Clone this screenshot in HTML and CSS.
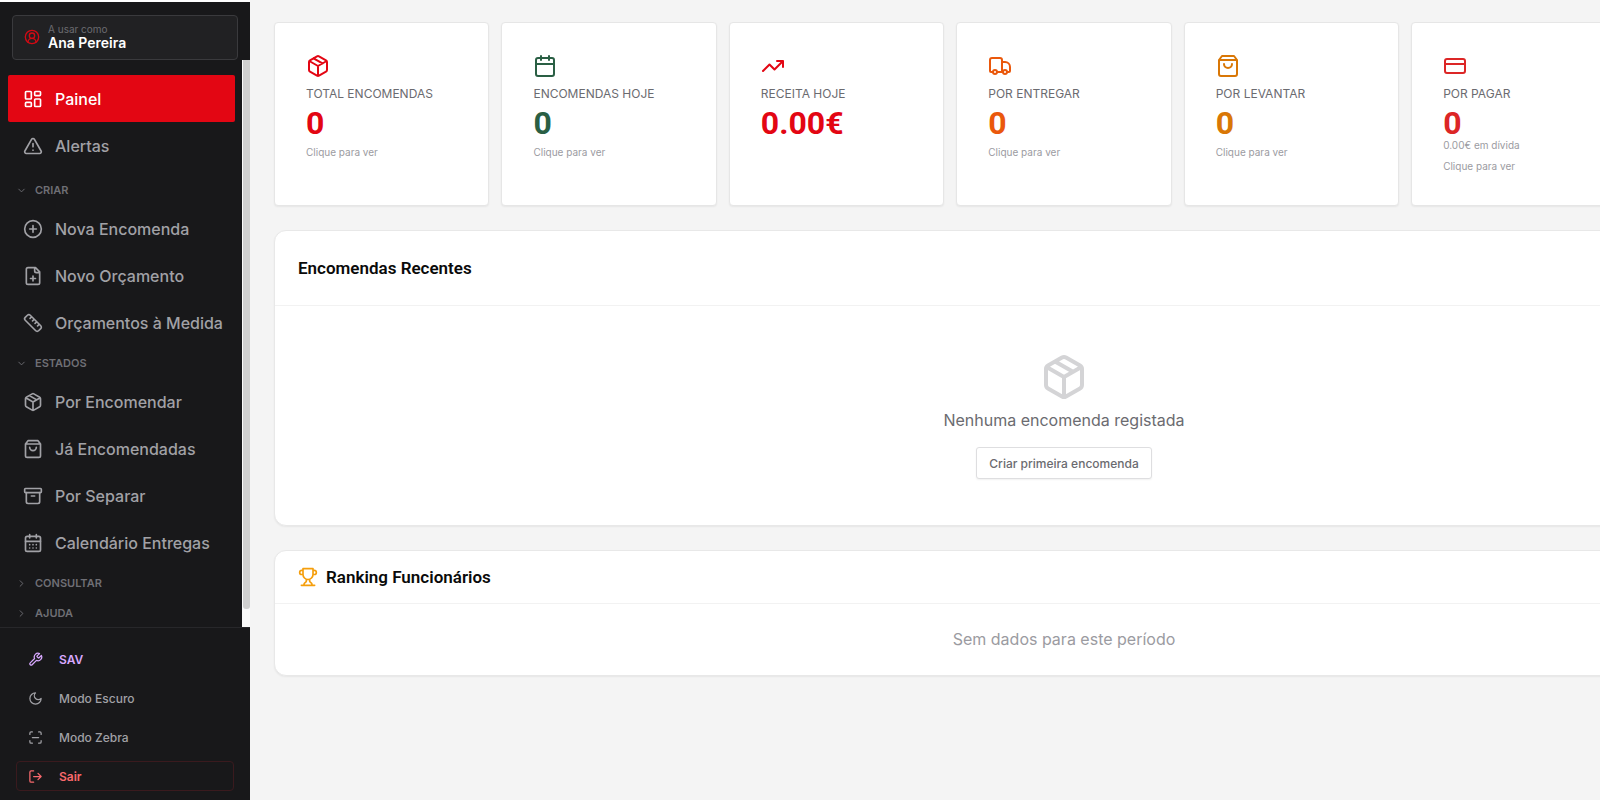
FILE: index.html
```
<!DOCTYPE html>
<html lang="pt">
<head>
    <meta charset="UTF-8">
    <meta name="viewport" content="width=device-width, initial-scale=1.0">
    <title>Painel</title>
    <link rel="stylesheet" href="styles.css">
</head>
<body>
    <!-- Shared icons -->
    <svg class="sprite" aria-hidden="true">
        <symbol id="i-package" viewBox="0 0 24 24"><path d="M11 21.73a2 2 0 0 0 2 0l7-4A2 2 0 0 0 21 16V8a2 2 0 0 0-1-1.73l-7-4a2 2 0 0 0-2 0l-7 4A2 2 0 0 0 3 8v8a2 2 0 0 0 1 1.73zM12 22V12M3.29 7 12 12l8.71-5M7.5 4.27l9 5.15"/></symbol>
        <symbol id="i-bag" viewBox="0 0 24 24"><path d="M6 2 3 6v14a2 2 0 0 0 2 2h14a2 2 0 0 0 2-2V6l-3-4ZM3 6h18M16 10a4 4 0 0 1-8 0"/></symbol>
        <symbol id="i-down" viewBox="0 0 24 24"><path d="m6 9 6 6 6-6"/></symbol>
        <symbol id="i-right" viewBox="0 0 24 24"><path d="m9 18 6-6-6-6"/></symbol>
    </svg>

    <div class="layout">
        <aside class="sidebar">
            <div class="user-wrap">
                <button class="user" type="button">
                    <svg class="icon" viewBox="0 0 24 24"><path d="M18 20a6 6 0 0 0-12 0"/><circle cx="12" cy="10" r="4"/><circle cx="12" cy="12" r="10"/></svg>
                    <span class="user-text">
                        <span class="user-label">A usar como</span>
                        <span class="user-name">Ana Pereira</span>
                    </span>
                </button>
            </div>

            <div class="nav-wrap">
                <nav class="nav">
                    <div class="nav-group">
                        <a class="nav-item active" href="#">
                            <svg class="icon" viewBox="0 0 24 24"><rect width="7" height="9" x="3" y="3" rx="1"/><rect width="7" height="5" x="14" y="3" rx="1"/><rect width="7" height="9" x="14" y="12" rx="1"/><rect width="7" height="5" x="3" y="16" rx="1"/></svg>
                            Painel
                        </a>
                        <a class="nav-item" href="#">
                            <svg class="icon" viewBox="0 0 24 24"><path d="m21.73 18-8-14a2 2 0 0 0-3.48 0l-8 14A2 2 0 0 0 4 21h16a2 2 0 0 0 1.73-3M12 9v4M12 17h.01"/></svg>
                            Alertas
                        </a>
                    </div>

                    <button class="nav-section" type="button"><svg class="icon"><use href="#i-down"/></svg>CRIAR</button>
                    <a class="nav-item" href="#">
                        <svg class="icon" viewBox="0 0 24 24"><circle cx="12" cy="12" r="10"/><path d="M8 12h8M12 8v8"/></svg>
                        Nova Encomenda
                    </a>
                    <a class="nav-item" href="#">
                        <svg class="icon" viewBox="0 0 24 24"><path d="M15 2H6a2 2 0 0 0-2 2v16a2 2 0 0 0 2 2h12a2 2 0 0 0 2-2V7ZM14 2v4a2 2 0 0 0 2 2h4M9 15h6M12 18v-6"/></svg>
                        Novo Orçamento
                    </a>
                    <a class="nav-item" href="#">
                        <svg class="icon" viewBox="0 0 24 24"><path d="M21.3 15.3a2.4 2.4 0 0 1 0 3.4l-2.6 2.6a2.4 2.4 0 0 1-3.4 0L2.7 8.7a2.41 2.41 0 0 1 0-3.4l2.6-2.6a2.41 2.41 0 0 1 3.4 0ZM14.5 12.5l2-2M11.5 9.5l2-2M8.5 6.5l2-2M17.5 15.5l2-2"/></svg>
                        Orçamentos à Medida
                    </a>

                    <button class="nav-section" type="button"><svg class="icon"><use href="#i-down"/></svg>ESTADOS</button>
                    <a class="nav-item" href="#">
                        <svg class="icon"><use href="#i-package"/></svg>
                        Por Encomendar
                    </a>
                    <a class="nav-item" href="#">
                        <svg class="icon"><use href="#i-bag"/></svg>
                        Já Encomendadas
                    </a>
                    <a class="nav-item" href="#">
                        <svg class="icon" viewBox="0 0 24 24"><rect width="20" height="5" x="2" y="3" rx="1"/><path d="M4 8v11a2 2 0 0 0 2 2h12a2 2 0 0 0 2-2V8M10 12h4"/></svg>
                        Por Separar
                    </a>
                    <a class="nav-item" href="#">
                        <svg class="icon" viewBox="0 0 24 24"><rect width="18" height="18" x="3" y="4" rx="2"/><path d="M8 2v4M16 2v4M3 10h18M8 14h.01M12 14h.01M16 14h.01M8 18h.01M12 18h.01M16 18h.01"/></svg>
                        Calendário Entregas
                    </a>

                    <button class="nav-section" type="button"><svg class="icon"><use href="#i-right"/></svg>CONSULTAR</button>
                    <button class="nav-section" type="button"><svg class="icon"><use href="#i-right"/></svg>AJUDA</button>
                </nav>
                <div class="scrollbar"><div class="scrollbar-thumb"></div></div>
            </div>

            <div class="sidebar-footer">
                <button class="tool tool-sav" type="button">
                    <svg class="icon" viewBox="0 0 24 24"><path d="M14.7 6.3a1 1 0 0 0 0 1.4l1.6 1.6a1 1 0 0 0 1.4 0l3.77-3.77a6 6 0 0 1-7.94 7.94l-6.91 6.91a2.12 2.12 0 0 1-3-3l6.91-6.91a6 6 0 0 1 7.94-7.94l-3.76 3.76z"/></svg>
                    SAV
                </button>
                <button class="tool" type="button">
                    <svg class="icon" viewBox="0 0 24 24"><path d="M12 3a6 6 0 0 0 9 9 9 9 0 1 1-9-9Z"/></svg>
                    Modo Escuro
                </button>
                <button class="tool" type="button">
                    <svg class="icon" viewBox="0 0 24 24"><path d="M3 7V5a2 2 0 0 1 2-2h2M17 3h2a2 2 0 0 1 2 2v2M21 17v2a2 2 0 0 1-2 2h-2M7 21H5a2 2 0 0 1-2-2v-2M7 12h10"/></svg>
                    Modo Zebra
                </button>
                <button class="tool tool-exit" type="button">
                    <svg class="icon" viewBox="0 0 24 24"><path d="M9 21H5a2 2 0 0 1-2-2V5a2 2 0 0 1 2-2h4M16 17l5-5-5-5M21 12H9"/></svg>
                    Sair
                </button>
            </div>
        </aside>

        <main class="main">
            <div class="dashboard">
                <div class="stats">
                    <a class="stat red" href="#">
                        <svg class="icon"><use href="#i-package"/></svg>
                        <span class="stat-label">TOTAL ENCOMENDAS</span>
                        <span class="stat-value">0</span>
                        <span class="stat-hint">Clique para ver</span>
                    </a>
                    <a class="stat green" href="#">
                        <svg class="icon" viewBox="0 0 24 24"><rect width="18" height="18" x="3" y="4" rx="2"/><path d="M8 2v4M16 2v4M3 10h18"/></svg>
                        <span class="stat-label">ENCOMENDAS HOJE</span>
                        <span class="stat-value">0</span>
                        <span class="stat-hint">Clique para ver</span>
                    </a>
                    <div class="stat red">
                        <svg class="icon" viewBox="0 0 24 24"><path d="m22 7-8.5 8.5-5-5L2 17M16 7h6v6"/></svg>
                        <span class="stat-label">RECEITA HOJE</span>
                        <span class="stat-value">0.00€</span>
                    </div>
                    <a class="stat orange" href="#">
                        <svg class="icon" viewBox="0 0 24 24"><path d="M14 18V6a2 2 0 0 0-2-2H4a2 2 0 0 0-2 2v11a1 1 0 0 0 1 1h2M15 18H9M19 18h2a1 1 0 0 0 1-1v-4a5 5 0 0 0-5-5h-3"/><circle cx="17" cy="18" r="2"/><circle cx="7" cy="18" r="2"/></svg>
                        <span class="stat-label">POR ENTREGAR</span>
                        <span class="stat-value">0</span>
                        <span class="stat-hint">Clique para ver</span>
                    </a>
                    <a class="stat amber" href="#">
                        <svg class="icon"><use href="#i-bag"/></svg>
                        <span class="stat-label">POR LEVANTAR</span>
                        <span class="stat-value">0</span>
                        <span class="stat-hint">Clique para ver</span>
                    </a>
                    <a class="stat crimson" href="#">
                        <svg class="icon" viewBox="0 0 24 24"><rect width="20" height="14" x="2" y="5" rx="2"/><path d="M2 10h20"/></svg>
                        <span class="stat-label">POR PAGAR</span>
                        <span class="stat-value">0</span>
                        <span class="stat-debt">0.00€ em dívida</span>
                        <span class="stat-hint">Clique para ver</span>
                    </a>
                </div>

                <section class="panel">
                    <div class="panel-header tall">
                        <h2>Encomendas Recentes</h2>
                    </div>
                    <div class="empty">
                        <svg class="icon"><use href="#i-package"/></svg>
                        <p>Nenhuma encomenda registada</p>
                        <button class="btn" type="button">Criar primeira encomenda</button>
                    </div>
                </section>

                <section class="panel">
                    <div class="panel-header">
                        <svg class="icon" viewBox="0 0 24 24"><path d="M6 9H4.5a2.5 2.5 0 0 1 0-5H6M18 9h1.5a2.5 2.5 0 0 0 0-5H18M4 22h16M10 14.66V17c0 .55-.47.98-.97 1.21C7.85 18.75 7 20.24 7 22M14 14.66V17c0 .55.47.98.97 1.21C16.15 18.75 17 20.24 17 22M18 2H6v7a6 6 0 0 0 12 0V2Z"/></svg>
                        <h2>Ranking Funcionários</h2>
                    </div>
                    <p class="no-data">Sem dados para este período</p>
                </section>
            </div>
        </main>
    </div>
</body>
</html>
```
FILE: styles.css
```
* {
    box-sizing: border-box;
}

body {
    margin: 0;
    background-color: #f4f4f4;
    font-family: Inter, "Liberation Sans", sans-serif;
    color: #0a0a0a;
}

button {
    font-family: inherit;
    cursor: pointer;
}

a {
    text-decoration: none;
}

.sprite {
    display: none;
}

.icon {
    flex-shrink: 0;
    fill: none;
    stroke: currentColor;
    stroke-width: 2;
    stroke-linecap: round;
    stroke-linejoin: round;
}

.layout {
    display: flex;
    height: 100vh;
    overflow: hidden;
}

/* Sidebar */
.sidebar {
    display: flex;
    flex-direction: column;
    flex-shrink: 0;
    width: 250px;
    border-top: 2px solid #fff;
    background-color: #18181a;
}

.user-wrap {
    padding: 13px 12px 0;
}

.user {
    display: flex;
    align-items: center;
    gap: 8px;
    width: 100%;
    height: 45px;
    padding: 0 11px 2px;
    border: 1px solid #3a3a3d;
    border-radius: 4px;
    background-color: #212123;
    text-align: left;
}

.user .icon {
    width: 16px;
    height: 16px;
    color: #d20a14;
}

.user-text {
    display: flex;
    flex-direction: column;
}

.user-label {
    font-size: 10px;
    line-height: 12px;
    color: #6b6b70;
}

.user-name {
    font-size: 14px;
    font-weight: 600;
    line-height: 15px;
    color: #fff;
}

.nav-wrap {
    display: flex;
    flex: 1;
    min-height: 0;
}

.nav {
    flex: 1;
    padding: 15px 7px 0 8px;
    overflow: hidden;
}

.nav-group {
    padding-bottom: 6px;
}

.nav-item {
    display: flex;
    align-items: center;
    gap: 12px;
    height: 47px;
    padding: 0 15px;
    border-radius: 2px;
    font-size: 16px;
    font-weight: 500;
    color: #a1a1a6;
    white-space: nowrap;
}

.nav-item .icon {
    width: 20px;
    height: 20px;
}

.nav-item.active {
    background-color: #e30613;
    color: #fff;
}

.nav-section {
    display: flex;
    align-items: center;
    gap: 8px;
    width: 100%;
    height: 30px;
    padding: 0 8px;
    border: none;
    background: none;
    font-size: 11px;
    font-weight: 600;
    color: #6f6f75;
}

.nav-item + .nav-section {
    margin-top: 2px;
}

.nav-section .icon {
    width: 11px;
    height: 11px;
}

.scrollbar {
    width: 8px;
    padding: 0 0 18px 1px;
    background-color: #fafafa;
}

.scrollbar-thumb {
    height: 100%;
    border-radius: 0 0 3px 3px;
    background-color: #d0d0d0;
}

.sidebar-footer {
    display: flex;
    flex-direction: column;
    gap: 9px;
    padding: 16px 16px 9px;
    border-top: 1px solid #27272a;
}

.tool {
    display: flex;
    align-items: center;
    gap: 16px;
    height: 30px;
    padding: 0 11px;
    border: 1px solid transparent;
    border-radius: 4px;
    background: none;
    font-size: 12px;
    font-weight: 500;
    color: #a1a1a6;
}

.tool .icon {
    width: 15px;
    height: 15px;
}

.tool-sav {
    font-weight: 600;
    color: #d8a8ff;
}

.tool-exit {
    border-color: #3a1a1e;
    font-weight: 600;
    color: #f8686c;
}

/* Main content */
.main {
    flex: 1;
    min-width: 0;
    overflow: hidden;
    padding: 22px 24px;
}

.dashboard {
    display: flex;
    flex-direction: column;
    gap: 24px;
    min-width: 1580px;
}

.stats {
    display: grid;
    grid-template-columns: repeat(7, 1fr);
    gap: 12px;
}

.stat {
    display: flex;
    flex-direction: column;
    padding: 31px 31px 32px;
    border: 1px solid #e6e6e6;
    border-radius: 4px;
    background-color: #fff;
    box-shadow: 0 1px 2px rgba(0, 0, 0, 0.06);
}

.stat .icon {
    width: 24px;
    height: 24px;
    margin-bottom: 7px;
}

.stat-label {
    font-size: 12px;
    line-height: 18px;
    color: #6b6b70;
    white-space: nowrap;
}

.stat-value {
    margin-top: 5px;
    font-family: Roboto, sans-serif;
    font-size: 32px;
    font-weight: 700;
    line-height: 30px;
}

.stat-debt,
.stat-hint {
    font-size: 10px;
    line-height: 14px;
    color: #9b9ba1;
}

.stat-hint {
    margin-top: 7px;
}

.red {
    color: #e30613;
}

.green {
    color: #2a5f44;
}

.orange {
    color: #ea580c;
}

.amber {
    color: #d97706;
}

.crimson {
    color: #dc2626;
}

.panel {
    border: 1px solid #e8e8e8;
    border-radius: 12px;
    background-color: #fff;
    box-shadow: 0 1px 2px rgba(0, 0, 0, 0.06);
}

.panel-header {
    display: flex;
    align-items: center;
    gap: 8px;
    height: 53px;
    padding: 0 23px;
    border-bottom: 1px solid #f2f2f2;
}

.panel-header.tall {
    height: 75px;
}

.panel-header .icon {
    width: 20px;
    height: 20px;
    color: #f59e0b;
}

.panel-header h2 {
    margin: 0;
    font-family: Roboto, sans-serif;
    font-size: 17px;
    font-weight: 600;
}

.empty {
    display: flex;
    flex-direction: column;
    align-items: center;
    padding: 47px 24px 46px;
}

.empty .icon {
    width: 48px;
    height: 48px;
    color: #d4d4d6;
}

.empty p {
    margin: 7px 0 15px;
    font-size: 16px;
    line-height: 24px;
    color: #6b6b70;
}

.btn {
    height: 32px;
    padding: 0 12px;
    border: 1px solid #dedee0;
    border-radius: 3px;
    background-color: #fff;
    box-shadow: 0 1px 2px rgba(0, 0, 0, 0.06);
    font-size: 12px;
    font-weight: 500;
    color: #6b6b70;
}

.no-data {
    margin: 0;
    padding: 24px;
    font-size: 16px;
    line-height: 23px;
    text-align: center;
    color: #9b9ba1;
}
```
